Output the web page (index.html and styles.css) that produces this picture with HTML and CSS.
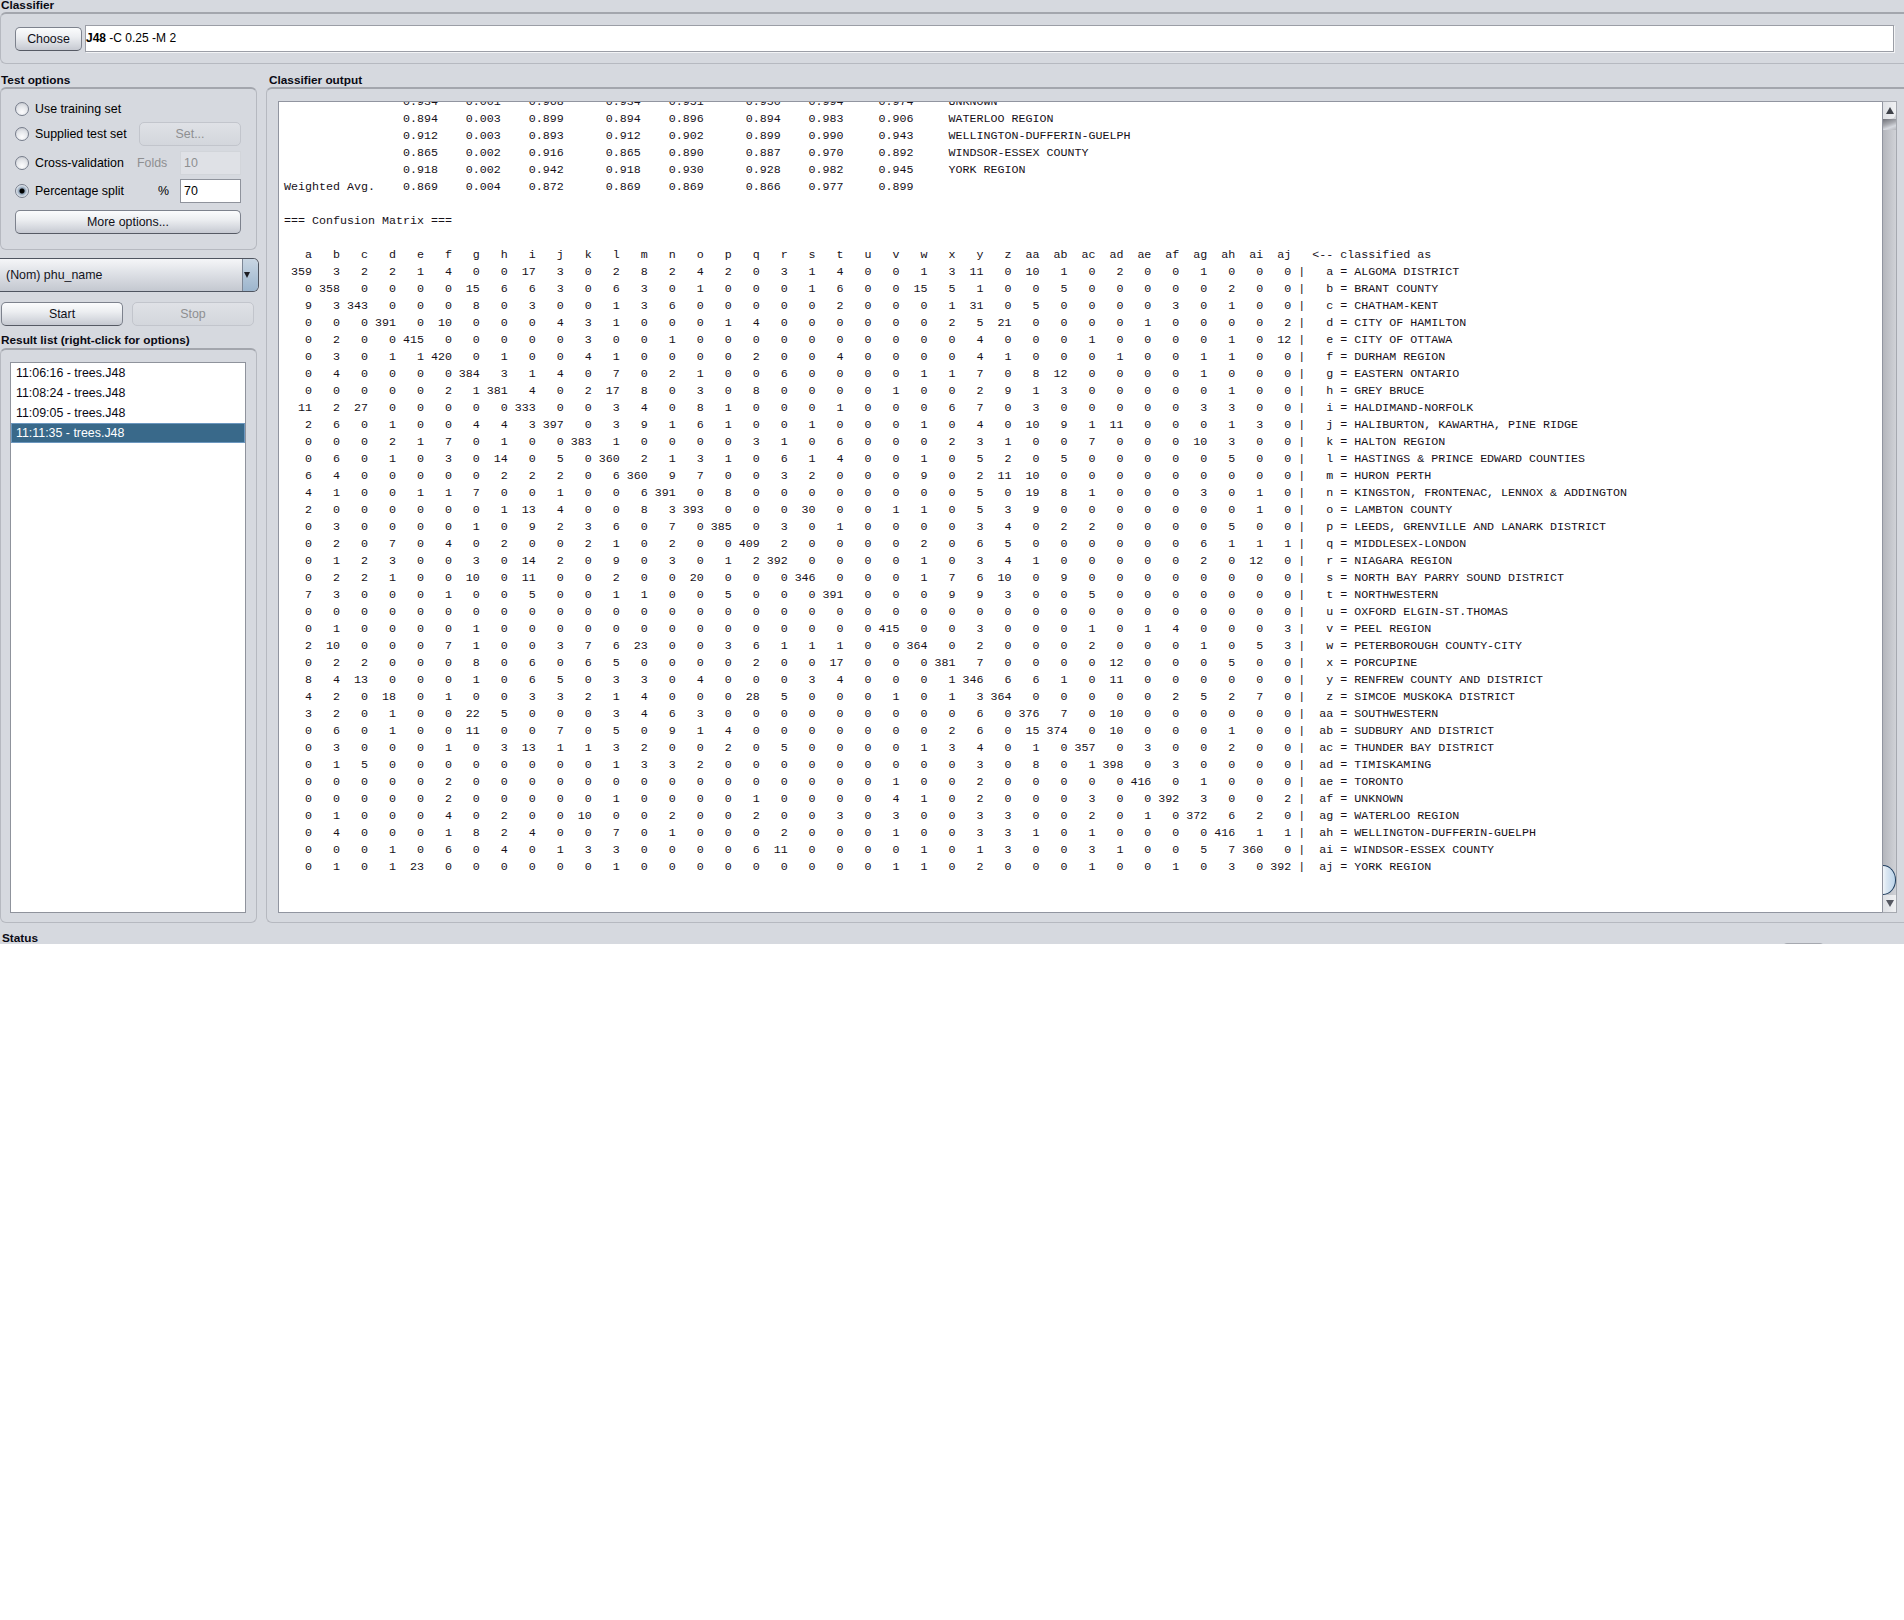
FILE: index.html
```html
<!DOCTYPE html>
<html lang="en">
<head>
<meta charset="utf-8">
<title>Classifier</title>
<link rel="stylesheet" href="styles.css">
</head>
<body>
<div class="app">
  <div class="title title-first">Classifier</div>
  <section class="group classifier-group">
    <button class="btn choose-btn">Choose</button>
    <div class="classifier-field"><b>J48</b> -C 0.25 -M 2</div>
  </section>

  <div class="main">
    <div class="left">
      <div class="title">Test options</div>
      <section class="group options">
        <div class="opt-row opt-row-1"><span class="radio"></span><span class="opt-label">Use training set</span></div>
        <div class="opt-row opt-row-2"><span class="radio"></span><span class="opt-label">Supplied test set</span><button class="btn btn-disabled set-btn">Set...</button></div>
        <div class="opt-row opt-row-3"><span class="radio"></span><span class="opt-label">Cross-validation</span><span class="mid-label disabled">Folds</span><span class="num-field num-field-disabled">10</span></div>
        <div class="opt-row opt-row-4"><span class="radio radio-on"></span><span class="opt-label">Percentage split</span><span class="mid-label pct">%</span><span class="num-field">70</span></div>
        <button class="btn more-btn">More options...</button>
      </section>
      <div class="combo"><span class="combo-text">(Nom) phu_name</span><span class="combo-arrow"><span class="tri-down"></span></span></div>
      <div class="run-row">
        <button class="btn run-btn">Start</button>
        <button class="btn btn-disabled run-btn">Stop</button>
      </div>
      <div class="title result-title">Result list (right-click for options)</div>
      <section class="group result-group">
        <ul class="result-list">
          <li>11:06:16 - trees.J48</li>
          <li>11:08:24 - trees.J48</li>
          <li>11:09:05 - trees.J48</li>
          <li class="selected">11:11:35 - trees.J48</li>
        </ul>
      </section>
    </div>

    <div class="right">
      <div class="title output-title">Classifier output</div>
      <section class="group output-group">
        <div class="output-box"><pre class="output">                 0.934    0.001    0.968      0.934    0.951      0.950    0.994     0.974     UNKNOWN
                 0.894    0.003    0.899      0.894    0.896      0.894    0.983     0.906     WATERLOO REGION
                 0.912    0.003    0.893      0.912    0.902      0.899    0.990     0.943     WELLINGTON-DUFFERIN-GUELPH
                 0.865    0.002    0.916      0.865    0.890      0.887    0.970     0.892     WINDSOR-ESSEX COUNTY
                 0.918    0.002    0.942      0.918    0.930      0.928    0.982     0.945     YORK REGION
Weighted Avg.    0.869    0.004    0.872      0.869    0.869      0.866    0.977     0.899     

=== Confusion Matrix ===

   a   b   c   d   e   f   g   h   i   j   k   l   m   n   o   p   q   r   s   t   u   v   w   x   y   z  aa  ab  ac  ad  ae  af  ag  ah  ai  aj   &lt;-- classified as
 359   3   2   2   1   4   0   0  17   3   0   2   8   2   4   2   0   3   1   4   0   0   1   3  11   0  10   1   0   2   0   0   1   0   0   0 |   a = ALGOMA DISTRICT
   0 358   0   0   0   0  15   6   6   3   0   6   3   0   1   0   0   0   1   6   0   0  15   5   1   0   0   5   0   0   0   0   0   2   0   0 |   b = BRANT COUNTY
   9   3 343   0   0   0   8   0   3   0   0   1   3   6   0   0   0   0   0   2   0   0   0   1  31   0   5   0   0   0   0   3   0   1   0   0 |   c = CHATHAM-KENT
   0   0   0 391   0  10   0   0   0   4   3   1   0   0   0   1   4   0   0   0   0   0   0   2   5  21   0   0   0   0   1   0   0   0   0   2 |   d = CITY OF HAMILTON
   0   2   0   0 415   0   0   0   0   0   3   0   0   1   0   0   0   0   0   0   0   0   0   0   4   0   0   0   1   0   0   0   0   1   0  12 |   e = CITY OF OTTAWA
   0   3   0   1   1 420   0   1   0   0   4   1   0   0   0   0   2   0   0   4   0   0   0   0   4   1   0   0   0   1   0   0   1   1   0   0 |   f = DURHAM REGION
   0   4   0   0   0   0 384   3   1   4   0   7   0   2   1   0   0   6   0   0   0   0   1   1   7   0   8  12   0   0   0   0   1   0   0   0 |   g = EASTERN ONTARIO
   0   0   0   0   0   2   1 381   4   0   2  17   8   0   3   0   8   0   0   0   0   1   0   0   2   9   1   3   0   0   0   0   0   1   0   0 |   h = GREY BRUCE
  11   2  27   0   0   0   0   0 333   0   0   3   4   0   8   1   0   0   0   1   0   0   0   6   7   0   3   0   0   0   0   0   3   3   0   0 |   i = HALDIMAND-NORFOLK
   2   6   0   1   0   0   4   4   3 397   0   3   9   1   6   1   0   0   1   0   0   0   1   0   4   0  10   9   1  11   0   0   0   1   3   0 |   j = HALIBURTON, KAWARTHA, PINE RIDGE
   0   0   0   2   1   7   0   1   0   0 383   1   0   0   0   0   3   1   0   6   0   0   0   2   3   1   0   0   7   0   0   0  10   3   0   0 |   k = HALTON REGION
   0   6   0   1   0   3   0  14   0   5   0 360   2   1   3   1   0   6   1   4   0   0   1   0   5   2   0   5   0   0   0   0   0   5   0   0 |   l = HASTINGS &amp; PRINCE EDWARD COUNTIES
   6   4   0   0   0   0   0   2   2   2   0   6 360   9   7   0   0   3   2   0   0   0   9   0   2  11  10   0   0   0   0   0   0   0   0   0 |   m = HURON PERTH
   4   1   0   0   1   1   7   0   0   1   0   0   6 391   0   8   0   0   0   0   0   0   0   0   5   0  19   8   1   0   0   0   3   0   1   0 |   n = KINGSTON, FRONTENAC, LENNOX &amp; ADDINGTON
   2   0   0   0   0   0   0   1  13   4   0   0   8   3 393   0   0   0  30   0   0   1   1   0   5   3   9   0   0   0   0   0   0   0   1   0 |   o = LAMBTON COUNTY
   0   3   0   0   0   0   1   0   9   2   3   6   0   7   0 385   0   3   0   1   0   0   0   0   3   4   0   2   2   0   0   0   0   5   0   0 |   p = LEEDS, GRENVILLE AND LANARK DISTRICT
   0   2   0   7   0   4   0   2   0   0   2   1   0   2   0   0 409   2   0   0   0   0   2   0   6   5   0   0   0   0   0   0   6   1   1   1 |   q = MIDDLESEX-LONDON
   0   1   2   3   0   0   3   0  14   2   0   9   0   3   0   1   2 392   0   0   0   0   1   0   3   4   1   0   0   0   0   0   2   0  12   0 |   r = NIAGARA REGION
   0   2   2   1   0   0  10   0  11   0   0   2   0   0  20   0   0   0 346   0   0   0   1   7   6  10   0   9   0   0   0   0   0   0   0   0 |   s = NORTH BAY PARRY SOUND DISTRICT
   7   3   0   0   0   1   0   0   5   0   0   1   1   0   0   5   0   0   0 391   0   0   0   9   9   3   0   0   5   0   0   0   0   0   0   0 |   t = NORTHWESTERN
   0   0   0   0   0   0   0   0   0   0   0   0   0   0   0   0   0   0   0   0   0   0   0   0   0   0   0   0   0   0   0   0   0   0   0   0 |   u = OXFORD ELGIN-ST.THOMAS
   0   1   0   0   0   0   1   0   0   0   0   0   0   0   0   0   0   0   0   0   0 415   0   0   3   0   0   0   1   0   1   4   0   0   0   3 |   v = PEEL REGION
   2  10   0   0   0   7   1   0   0   3   7   6  23   0   0   3   6   1   1   1   0   0 364   0   2   0   0   0   2   0   0   0   1   0   5   3 |   w = PETERBOROUGH COUNTY-CITY
   0   2   2   0   0   0   8   0   6   0   6   5   0   0   0   0   2   0   0  17   0   0   0 381   7   0   0   0   0  12   0   0   0   5   0   0 |   x = PORCUPINE
   8   4  13   0   0   0   1   0   6   5   0   3   3   0   4   0   0   0   3   4   0   0   0   1 346   6   6   1   0  11   0   0   0   0   0   0 |   y = RENFREW COUNTY AND DISTRICT
   4   2   0  18   0   1   0   0   3   3   2   1   4   0   0   0  28   5   0   0   0   1   0   1   3 364   0   0   0   0   0   2   5   2   7   0 |   z = SIMCOE MUSKOKA DISTRICT
   3   2   0   1   0   0  22   5   0   0   0   3   4   6   3   0   0   0   0   0   0   0   0   0   6   0 376   7   0  10   0   0   0   0   0   0 |  aa = SOUTHWESTERN
   0   6   0   1   0   0  11   0   0   7   0   5   0   9   1   4   0   0   0   0   0   0   0   2   6   0  15 374   0  10   0   0   0   1   0   0 |  ab = SUDBURY AND DISTRICT
   0   3   0   0   0   1   0   3  13   1   1   3   2   0   0   2   0   5   0   0   0   0   1   3   4   0   1   0 357   0   3   0   0   2   0   0 |  ac = THUNDER BAY DISTRICT
   0   1   5   0   0   0   0   0   0   0   0   1   3   3   2   0   0   0   0   0   0   0   0   0   3   0   8   0   1 398   0   3   0   0   0   0 |  ad = TIMISKAMING
   0   0   0   0   0   2   0   0   0   0   0   0   0   0   0   0   0   0   0   0   0   1   0   0   2   0   0   0   0   0 416   0   1   0   0   0 |  ae = TORONTO
   0   0   0   0   0   2   0   0   0   0   0   1   0   0   0   0   1   0   0   0   0   4   1   0   2   0   0   0   3   0   0 392   3   0   0   2 |  af = UNKNOWN
   0   1   0   0   0   4   0   2   0   0  10   0   0   2   0   0   2   0   0   3   0   3   0   0   3   3   0   0   2   0   1   0 372   6   2   0 |  ag = WATERLOO REGION
   0   4   0   0   0   1   8   2   4   0   0   7   0   1   0   0   0   2   0   0   0   1   0   0   3   3   1   0   1   0   0   0   0 416   1   1 |  ah = WELLINGTON-DUFFERIN-GUELPH
   0   0   0   1   0   6   0   4   0   1   3   3   0   0   0   0   6  11   0   0   0   0   1   0   1   3   0   0   3   1   0   0   5   7 360   0 |  ai = WINDSOR-ESSEX COUNTY
   0   1   0   1  23   0   0   0   0   0   0   1   0   0   0   0   0   0   0   0   0   1   1   0   2   0   0   0   1   0   0   1   0   3   0 392 |  aj = YORK REGION</pre></div>
        <div class="scrollbar">
          <div class="sb-btn sb-up"><span class="tri-up"></span></div>
          <div class="sb-track">
            <div class="sb-shade"></div>
            <div class="sb-thumb"></div>
          </div>
          <div class="sb-btn sb-down"><span class="tri-down tri-grey"></span></div>
        </div>
      </section>
    </div>
  </div>

  <div class="status-row">
    <div class="title status-title">Status</div>
    <div class="log-btn"></div>
  </div>
</div>
</body>
</html>
```
FILE: styles.css
```css
* { box-sizing: border-box; }
html, body { margin: 0; padding: 0; background: #fff; }
body { font-family: "Liberation Sans", Arial, sans-serif; font-size: 12.4px; color: #000; }

.app {
  height: 944px;
  background: #d6d9df;
  overflow: hidden;
  display: flex;
  flex-direction: column;
}

.title {
  flex: none;
  font-weight: bold;
  font-size: 11.8px;
  height: 14px;
  line-height: 14px;
  padding-left: 1px;
  white-space: nowrap;
  color: #0a0a14;
}
.title-first { height: 12px; line-height: 10px; }
.output-title { padding-left: 3px; }
.result-title { margin-top: 7px; }
.status-title { padding-left: 2px; }

.group {
  border: 1px solid #b6b9c0;
  border-top: 2px solid #a3a6ad;
  border-radius: 6px;
}

/* classifier */
.classifier-group {
  height: 52px;
  flex: none;
  display: flex;
  align-items: center;
  gap: 3px;
  padding: 0 10px 0 14px;
  border-right: 0;
  border-radius: 6px 0 0 6px;
}
.classifier-field {
  flex: 1;
  height: 27px;
  line-height: 25px;
  background: #fff;
  border: 1px solid #9b9ea6;
  box-shadow: 1px 1px 0 #f3f4f6;
  padding-left: 0;
  font-size: 12px;
}

.btn {
  font: inherit;
  color: #101018;
  padding: 0;
  background: linear-gradient(#fbfcfd 0%, #eceef1 40%, #d6d9df 75%, #c6c9d1 100%);
  border: 1px solid #7d828d;
  border-bottom-color: #565a64;
  border-radius: 5px;
}
.btn-disabled {
  color: #8e8f91;
  background: linear-gradient(#dfe1e6, #d3d6dc);
  border-color: #c2c5cc;
}
.choose-btn { width: 67px; height: 24px; flex: none; }

/* main */
.main {
  margin-top: 9px;
  height: 850px;
  flex: none;
  display: grid;
  grid-template-columns: 257px 1fr;
  column-gap: 9px;
}
.left, .right { display: flex; flex-direction: column; min-width: 0; }

/* options */
.options {
  height: 163px;
  flex: none;
  padding: 7px 15px 0 14px;
  display: flex;
  flex-direction: column;
}
.opt-row { display: flex; align-items: center; flex: none; }
.opt-row-1 { height: 25px; }
.opt-row-2 { height: 25px; }
.opt-row-3 { height: 26px; margin-top: 4px; }
.opt-row-4 { height: 26px; margin-top: 2px; }
.radio {
  width: 14px;
  height: 14px;
  flex: none;
  border-radius: 50%;
  border: 1px solid #767d8b;
  background: radial-gradient(circle at 50% 75%, #fdfdfe 0%, #e3e5e9 55%, #bfc2c9 100%);
  margin-right: 6px;
}
.radio-on {
  background: radial-gradient(circle, #000 0%, #000 24%, #8fa3b8 36%, #e6ebf1 70%, #a9b6c6 100%);
}
.opt-label { width: 102px; flex: none; white-space: nowrap; }
.mid-label { width: 43px; flex: none; }
.disabled { color: #8e8f91; }
.pct { padding-left: 21px; }
.set-btn { margin-left: 2px; width: 102px; height: 24px; flex: none; }
.num-field {
  width: 61px;
  height: 24px;
  flex: none;
  line-height: 22px;
  padding-left: 3px;
  background: #fff;
  border: 1px solid #8f939c;
  color: #000;
}
.num-field-disabled { background: #dfe1e6; border-color: #d2d5da; color: #8e8f91; }
.more-btn { margin-top: 6px; height: 24px; width: 226px; flex: none; }

/* combo */
.combo {
  margin-top: 8px;
  margin-right: -2px;
  height: 34px;
  flex: none;
  display: flex;
  border: 1px solid #4f5560;
  border-left: 0;
  border-radius: 0 6px 6px 0;
  background: linear-gradient(#f5f6f8, #d9dce2 55%, #c4c8d0);
  overflow: hidden;
}
.combo-text { flex: 1; padding-left: 6px; line-height: 32px; color: #14141c; }
.combo-arrow {
  width: 16px;
  flex: none;
  display: flex;
  align-items: center;
  padding-left: 1px;
  background: linear-gradient(#c9d6e3, #9cb5cd);
  border-left: 1px solid #7d8796;
}
.tri-down {
  width: 0;
  height: 0;
  border-left: 3px solid transparent;
  border-right: 3px solid transparent;
  border-top: 6px solid #1c1c22;
}
.tri-grey { border-left-width: 4px; border-right-width: 4px; border-top: 7px solid #555861; }
.tri-up {
  width: 0;
  height: 0;
  border-left: 4px solid transparent;
  border-right: 4px solid transparent;
  border-bottom: 7px solid #3f4249;
}

.run-row { margin-top: 10px; padding-left: 1px; display: flex; gap: 9px; flex: none; }
.run-btn { width: 122px; height: 24px; }

/* results */
.result-group {
  margin-top: 1px;
  flex: 1;
  min-height: 0;
  padding: 12px 10px 9px 9px;
  display: flex;
}
.result-list {
  flex: 1;
  list-style: none;
  margin: 0;
  padding: 0;
  background: #fff;
  border: 1px solid #8f939c;
}
.result-list li {
  height: 20px;
  line-height: 20px;
  padding-left: 5px;
  color: #080814;
}
.result-list .selected {
  background: #39698a;
  color: #fff;
  outline: 1px solid #6c97bf;
  outline-offset: -1px;
}

/* output */
.output-group {
  flex: 1;
  min-height: 0;
  padding: 12px 7px 9px 11px;
  display: flex;
  border-right: 0;
  border-radius: 6px 0 0 6px;
}
.output-box {
  flex: 1;
  min-width: 0;
  background: #fff;
  border: 1px solid #9195a0;
  border-right: 0;
  padding-left: 5px;
  overflow: hidden;
}
.output {
  margin: -8px 0 0;
  font-family: "Liberation Mono", "Courier New", monospace;
  font-size: 11.67px;
  line-height: 17px;
  color: #161018;
}

.scrollbar {
  width: 15px;
  flex: none;
  display: flex;
  flex-direction: column;
  border: 1px solid #a6a9b0;
  border-left-color: #9195a0;
  background: linear-gradient(90deg, #c2c4c9, #d4d6da);
}
.sb-btn {
  height: 17px;
  flex: none;
  display: flex;
  align-items: center;
  justify-content: center;
  background: linear-gradient(90deg, #dfe1e5, #f0f1f3);
}
.sb-up { border-radius: 0 0 6px 0; }
.sb-track {
  flex: 1;
  min-height: 0;
  display: flex;
  flex-direction: column;
  justify-content: space-between;
  background: linear-gradient(90deg, #b4b6bc, #d0d2d7);
}
.sb-shade {
  height: 11px;
  background: linear-gradient(160deg, #6f7178 0%, #a9abb1 45%, #d6d9df 70%, #b4b6bc 100%);
}
.sb-thumb {
  height: 30px;
  width: 13px;
  border: 1px solid #1d3d5f;
  border-left: 0;
  border-radius: 0 13px 13px 0 / 0 15px 15px 0;
  background: linear-gradient(90deg, #f1f5f9 0%, #dbe7f2 30%, #bcd4ea 100%);
}

/* status */
.status-row {
  margin-top: 8px;
  display: flex;
  justify-content: space-between;
  flex: none;
}
.log-btn {
  margin-top: 12px;
  margin-right: 79px;
  width: 43px;
  height: 20px;
  border: 1px solid #a6a9b0;
  border-radius: 5px;
  background: #eceef1;
}
```
